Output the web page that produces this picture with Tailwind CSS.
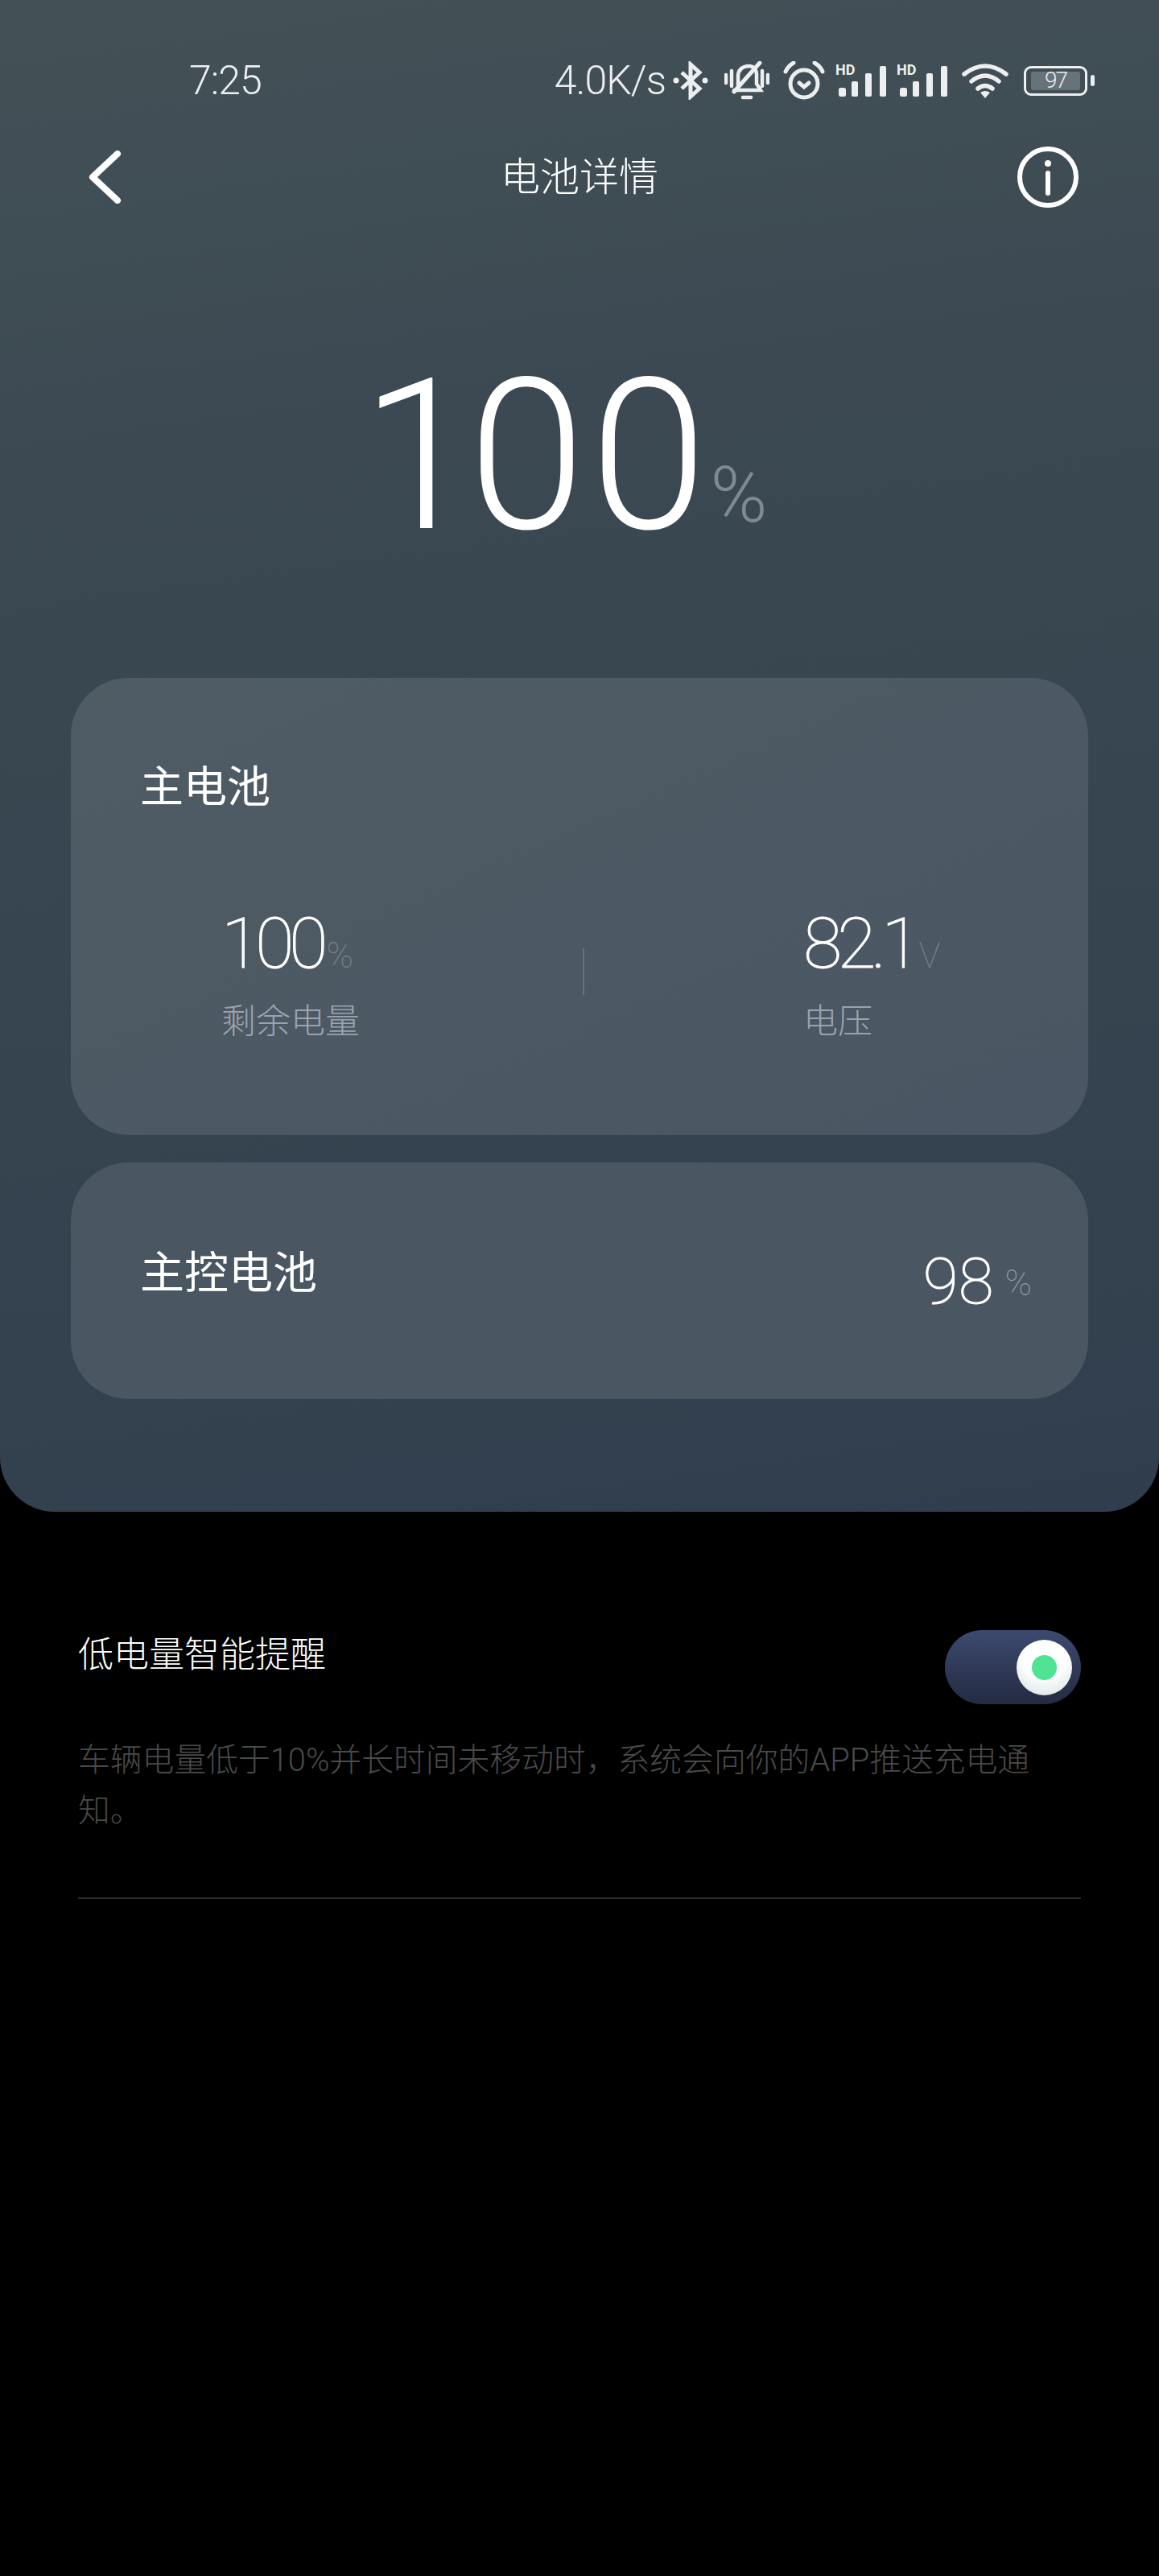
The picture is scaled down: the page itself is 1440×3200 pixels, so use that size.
<!DOCTYPE html>
<html lang="zh-CN">
<head>
    <meta charset="UTF-8">
    <meta name="viewport" content="width=device-width, initial-scale=1.0">
    <title>电池详情</title>
    <script src="https://cdn.jsdelivr.net/npm/@tailwindcss/browser@4"></script>
</head>
<body class="bg-black">
<div class="w-[1440px] h-[3200px] bg-black text-white font-['Roboto','Noto_Sans_CJK_SC',sans-serif]">
    <!-- Top panel -->
    <section class="h-[1878px] rounded-b-[68px] bg-[linear-gradient(172deg,#445257_0%,#3c4952_27%,#394751_45%,#33414f_88%,#303d4e_100%)] pt-[72px] px-[88px]">
        <!-- Status bar -->
        <div class="flex items-center h-[56px] -mr-[8px] text-[#eceeef]">
            <span class="ml-[147px] text-[50px] leading-none font-light tracking-[-1px]">7:25</span>
            <span class="ml-auto text-[50px] leading-none font-light tracking-[-1px]">4.0K/s</span>
            <div class="flex items-center ml-[9px]">
                <svg class="w-[44px] h-[48px]" viewBox="0 0 44 48" fill="none" stroke="currentColor" stroke-width="5"><path d="M11 14 L33 34 L22 44 V4 L33 14 L11 34"/><circle cx="4" cy="24" r="3.5" fill="currentColor" stroke="none"/><circle cx="40" cy="24" r="3.5" fill="currentColor" stroke="none"/></svg>
                <svg class="w-[56px] h-[48px] ml-[20px]" viewBox="0 0 56 48" fill="none" stroke="currentColor" stroke-width="4.5" stroke-linecap="round"><path d="M17 30 V19 Q17 7 30 6 Q39 6 40 16 V28 L45 36 H12"/><path d="M44 2 L12 38" stroke-width="5"/><path d="M2 17 V27 M9 12 V31 M54 17 V27 M47 12 V31"/><path d="M23 45 H33"/></svg>
                <svg class="w-[52px] h-[48px] ml-[17px]" viewBox="0 0 52 48" fill="none" stroke="currentColor" stroke-width="5" stroke-linecap="round"><circle cx="26" cy="28" r="17"/><path d="M20 27 L26 32 L32 27"/><path d="M3 13 Q6 6 13 2 M49 13 Q46 6 39 2"/></svg>
                <div class="relative w-[64px] h-[40px] ml-[13px]">
                    <span class="absolute left-0 top-0 text-[18px] leading-[14px] font-bold">HD</span>
                    <svg class="absolute inset-0 w-full h-full" viewBox="0 0 64 40" fill="currentColor"><rect x="4" y="29" width="9" height="11" rx="2.5"/><rect x="20" y="21" width="8" height="19" rx="2"/><rect x="37" y="11" width="8" height="29" rx="2"/><rect x="55" y="2" width="8" height="38" rx="2"/></svg>
                </div>
                <div class="relative w-[64px] h-[40px] ml-[12px]">
                    <span class="absolute left-0 top-0 text-[18px] leading-[14px] font-bold">HD</span>
                    <svg class="absolute inset-0 w-full h-full" viewBox="0 0 64 40" fill="currentColor"><rect x="4" y="29" width="9" height="11" rx="2.5"/><rect x="20" y="21" width="8" height="19" rx="2"/><rect x="37" y="11" width="8" height="29" rx="2"/><rect x="55" y="2" width="8" height="38" rx="2"/></svg>
                </div>
                <svg class="w-[58px] h-[44px] ml-[17px]" viewBox="0 0 58 44" fill="none" stroke="currentColor" stroke-width="5.5" stroke-linecap="round"><path d="M3 14 Q29 -6 55 14"/><path d="M12 23 Q29 9 46 23"/><path d="M20 32 Q29 25 38 32"/><path d="M29 44 L23 37 Q29 33 35 37 Z" fill="currentColor" stroke="none"/></svg>
                <div class="flex items-center ml-[19px]">
                    <div class="w-[79px] h-[37px] rounded-[9px] border-[3px] border-[#eceeef] px-[6px] py-[4px]">
                        <div class="h-full rounded-[3px] bg-[#67737a] flex items-center justify-center text-[28px] leading-none font-light tracking-[-2px]">97</div>
                    </div>
                    <div class="w-[5px] h-[14px] ml-[4px] rounded-full bg-[#eceeef]"></div>
                </div>
            </div>
        </div>

        <!-- Title bar -->
        <div class="relative flex items-center justify-between h-[84px] mt-[50px]">
            <svg class="w-[41px] h-[66px] ml-[22px]" viewBox="0 0 41 66" fill="none" stroke="white" stroke-width="8" stroke-linecap="round" stroke-linejoin="round"><path d="M36 4 L5 33 L36 62" /></svg>
            <h1 class="absolute left-0 right-0 text-center text-[49px] leading-none font-light">电池详情</h1>
            <svg class="w-[76px] h-[76px] mr-[12px]" viewBox="0 0 76 76" fill="none" stroke="white" stroke-linecap="round"><circle cx="38" cy="38" r="35" stroke-width="6"/><circle cx="38" cy="21" r="4" fill="white" stroke="none"/><path d="M38 33 V58" stroke-width="6"/></svg>
        </div>

        <!-- Big percentage -->
        <div class="flex items-baseline justify-center mt-[185px] h-[240px] pr-[38px]">
            <span class="text-[262px] leading-[240px] font-light tracking-[6px]"><span class="tracking-[-12px]">1</span>00</span>
            <span class="text-[96px] leading-none font-light text-[#7f8a90] ml-[-2px] -translate-y-[8px]">%</span>
        </div>

        <!-- Main battery card -->
        <div class="h-[568px] mt-[155px] rounded-[72px] bg-gradient-to-br from-[#4f5c64] to-[#4a5663] pl-[86px] pr-[88px] pt-[110px]">
            <h2 class="text-[54px] leading-none">主电池</h2>
            <div class="relative flex mt-[122px]">
                <div class="w-[824px] pl-[101px]">
                    <div class="flex items-baseline">
                        <span class="text-[88px] leading-none font-thin tracking-[-6px] [-webkit-text-stroke:1px_white]">100</span>
                        <span class="text-[45px] leading-none font-thin text-[#78848d] ml-[4px]">%</span>
                    </div>
                    <div class="mt-[32px] text-[43px] leading-none font-light text-[#99a4ae]">剩余电量</div>
                </div>
                <div>
                    <div class="flex items-baseline">
                        <span class="text-[88px] leading-none font-thin tracking-[-6px] [-webkit-text-stroke:1px_white]">82.1</span>
                        <span class="text-[45px] leading-none font-thin text-[#78848d] ml-[4px]">V</span>
                    </div>
                    <div class="mt-[32px] text-[43px] leading-none font-light text-[#99a4ae]">电压</div>
                </div>
                <div class="absolute left-[550px] top-[50px] w-[2px] h-[58px] bg-[#66727c]"></div>
            </div>
        </div>

        <!-- Controller battery card -->
        <div class="flex justify-between h-[294px] mt-[34px] rounded-[72px] bg-[#4a5662] pl-[86px] pr-[70px] pt-[110px]">
            <h2 class="text-[55px] leading-none">主控电池</h2>
            <div class="flex items-baseline h-[70px] mt-[-2px]">
                <span class="text-[80px] leading-[80px] font-thin [-webkit-text-stroke:1px_white]">98</span>
                <span class="text-[45px] leading-none font-thin text-[#919ca6] ml-[14px] -translate-y-[10px]">%</span>
            </div>
        </div>
    </section>

    <!-- Low battery reminder -->
    <section class="mx-[97px] pt-[156px] pb-[76px] border-b-2 border-[#2b2c33] relative">
        <h3 class="text-[44px] leading-none font-light">低电量智能提醒</h3>
        <p class="w-[1200px] mt-[77px] text-[39.8px] leading-[63px] font-light text-[#4a4a4a]">车辆电量低于10%并长时间未移动时，系统会向你的APP推送充电通知。</p>
        <div class="absolute right-0 top-[147px] w-[169px] h-[92px] rounded-full bg-gradient-to-b from-[#3d4a70] to-[#242b42] flex items-center justify-end pr-[11px]">
            <div class="w-[69px] h-[69px] rounded-full bg-[radial-gradient(circle_at_50%_30%,#ffffff_45%,#dfe6e6_85%,#c9ced6_100%)] flex items-center justify-center">
                <div class="w-[31px] h-[31px] rounded-full bg-[#4fe393]"></div>
            </div>
        </div>
    </section>
</div>
</body>
</html>
